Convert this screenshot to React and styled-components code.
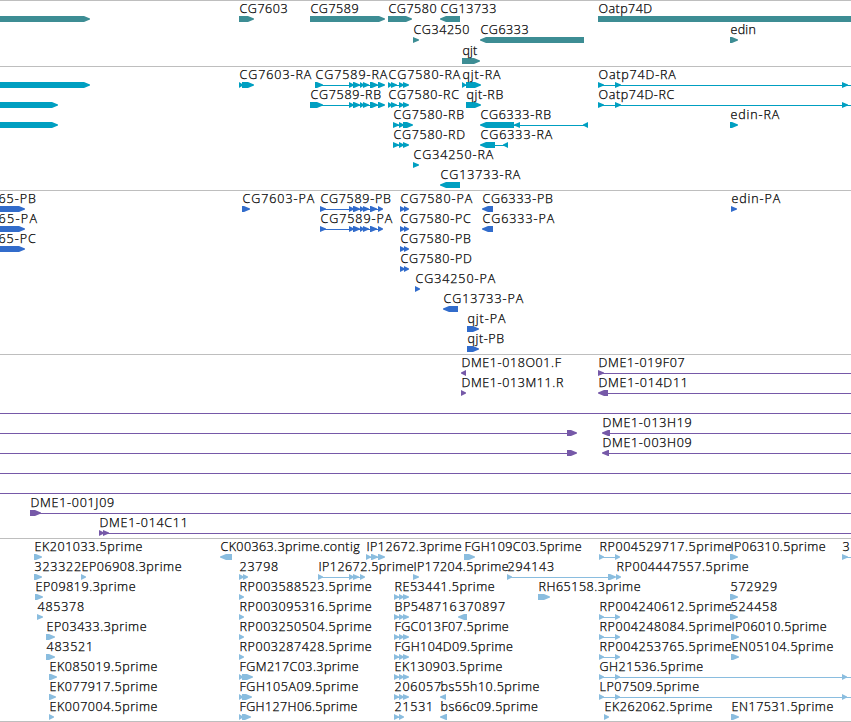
import React from "react";
import styled, { createGlobalStyle } from "styled-components";

const VIEW_WIDTH = 851;
const EDGE = VIEW_WIDTH + 10; // features running off the right side
const HEAD = 6;

const GlobalStyle = createGlobalStyle`
  body {
    margin: 0;
    background: #ffffff;
  }
`;

const Browser = styled.main`
  display: flex;
  flex-direction: column;
  width: ${VIEW_WIDTH}px;
  height: 722px;
  box-sizing: border-box;
  overflow: hidden;
  border-bottom: 1px solid #bebebe;
  background: #ffffff;
`;

const Track = styled.section`
  flex: none;
  display: flex;
  flex-direction: column;
  box-sizing: border-box;
  height: ${(p) => p.$height}px;
  border-top: 1px solid #bebebe;
  color: ${(p) => p.$color};
`;

const Lane = styled.div`
  position: relative;
  flex: none;
  height: ${(p) => p.$height}px;
`;

const Label = styled.span`
  position: absolute;
  top: 0;
  left: ${(p) => p.$x}px;
  padding-left: 0.5px;
  color: #000000;
  font-family: "Open Sans", "Noto Sans", sans-serif;
  font-size: 12.5px;
  font-weight: 300;
  -webkit-text-stroke: 0.25px #000000;
  line-height: 16px;
  letter-spacing: ${(p) => p.$tracking}px;
  white-space: nowrap;
`;

const Glyphs = styled.svg`
  position: absolute;
  top: 15px;
  left: 0;
  display: block;
  fill: currentColor;
`;

// right-facing feature, optionally mirrored, six pixels tall
const arrowPath = ([from, to], left) => {
  const head = Math.min(HEAD, to - from);
  if (left) {
    return `M${to} 0H${from + head}L${from} 2.6V3.4L${from + head} 6H${to}Z`;
  }
  return `M${from} 0H${to - head}L${to} 2.6V3.4L${to - head} 6H${from}Z`;
};

// f: forward strand, r: reverse strand
const f = (name, exons, extra) => ({ name, exons, ...extra });
const r = (name, exons, extra) => ({ name, exons, left: true, ...extra });
const span = () => ({ exons: [], line: [-5, EDGE] });

const toEdge = { line: [600, EDGE] };
const tail7589 = [[349, 354], [353, 360], [360, 364], [363, 369], [370, 378], [378, 385]];
const cds7589 = [[320, 326], [349, 354], [353, 360], [360, 364], [363, 369], [370, 377], [378, 383]];
const exons7580 = [[388, 392], [391, 397], [399, 404], [403, 409]];
const cds7580 = [[400, 405], [404, 409]];
const oatp = [[598, 604], [615, 621], [842, 848]];
const triple = [[394, 399], [399, 404], [403, 409]];
const pair = [[599, 604], [615, 620]];
const single = [[239, 244]];

const tracks = [
  {
    color: "#3d8d94",
    height: 66,
    lane: 21,
    lanes: [
      [
        f("", [[-5, 90]]),
        f("CG7603", [[239, 254]]),
        f("CG7589", [[310, 385]]),
        f("CG7580", [[388, 412]]),
        r("CG13733", [[440, 460]]),
        f("Oatp74D", [[598, EDGE]]),
      ],
      [f("CG34250", [[413, 419]]), r("CG6333", [[480, 584]]), f("edin", [[730, 738]])],
      [f("qjt", [[462, 480]])],
    ],
  },
  {
    color: "#009fc1",
    height: 124,
    lane: 20,
    lanes: [
      [
        f("", [[-5, 90]]),
        f("CG7603-RA", [[239, 243], [242, 254]]),
        f("CG7589-RA", [[315, 323], ...tail7589]),
        f("CG7580-RA", exons7580),
        f("qjt-RA", [[462, 466], [466, 481]]),
        f("Oatp74D-RA", oatp, toEdge),
      ],
      [
        f("", [[-5, 58]]),
        f("CG7589-RB", [[310, 323], ...tail7589]),
        f("CG7580-RC", exons7580),
        f("qjt-RB", [[466, 481]]),
        f("Oatp74D-RC", oatp, toEdge),
      ],
      [
        f("", [[-5, 58]]),
        f("CG7580-RB", [[393, 399], [399, 404], [403, 413]]),
        r("CG6333-RB", [[480, 514], [514, 520], [583, 588]]),
        f("edin-RA", [[730, 738]]),
      ],
      [
        f("CG7580-RD", [[393, 399], [399, 404], [403, 409]]),
        r("CG6333-RA", [[480, 495], [503, 508]]),
      ],
      [f("CG34250-RA", [[413, 419]])],
      [r("CG13733-RA", [[440, 460]])],
    ],
  },
  {
    color: "#326ccb",
    height: 164,
    lane: 20,
    lanes: [
      [
        f("65-PB", [[-5, 25]], { at: -2 }),
        f("CG7603-PA", [[242, 250]]),
        f("CG7589-PB", cds7589),
        f("CG7580-PA", cds7580),
        r("CG6333-PB", [[482, 493]]),
        f("edin-PA", [[731, 737]]),
      ],
      [
        f("65-PA", [[-5, 25]], { at: -2 }),
        f("CG7589-PA", cds7589),
        f("CG7580-PC", cds7580),
        r("CG6333-PA", [[482, 493]]),
      ],
      [f("65-PC", [[-5, 25]], { at: -2 }), f("CG7580-PB", cds7580)],
      [f("CG7580-PD", cds7580)],
      [f("CG34250-PA", [[415, 420]])],
      [r("CG13733-PA", [[443, 458]])],
      [f("qjt-PA", [[467, 479]])],
      [f("qjt-PB", [[467, 479]])],
    ],
  },
  {
    color: "#7659a8",
    height: 184,
    lane: 20,
    lanes: [
      [r("DME1-018O01.F", [[461, 466]]), f("DME1-019F07", [[598, 604]], toEdge)],
      [f("DME1-013M11.R", [[461, 466]]), r("DME1-014D11", [[598, 608]], toEdge)],
      [span()],
      [f("", [[567, 577]], { line: [-5, 570] }), r("DME1-013H19", [[602, 610]], { line: [606, EDGE] })],
      [f("", [[567, 577]], { line: [-5, 570] }), r("DME1-003H09", [[602, 609]], { line: [606, EDGE] })],
      [span()],
      [span()],
      [f("DME1-001J09", [[30, 41]], { line: [32, EDGE] })],
      [f("DME1-014C11", [[99, 104], [103, 109]], { line: [100, EDGE] })],
    ],
  },
  {
    color: "#8abddf",
    height: 183,
    lane: 20,
    lanes: [
      [
        f("EK201033.5prime", [[34, 42]]),
        r("CK00363.3prime.contig", [[220, 232]]),
        f("IP12672.3prime", [[366, 371], [371, 378], [378, 385]]),
        f("FGH109C03.5prime", [[464, 475]]),
        f("RP004529717.5prime", pair),
        f("IP06310.5prime", [[730, 738]]),
        f("3", [[842, 848]], { line: [843, EDGE] }),
      ],
      [
        f("323322", [[34, 42]]),
        f("EP06908.3prime", [[81, 86]]),
        f("23798", [[239, 244], [243, 248]]),
        f("IP12672.5prime", [[318, 323], [349, 354], [353, 359], [360, 365]]),
        f("IP17204.5prime", [[413, 419]]),
        f("294143", [[507, 512], [608, 616]]),
        f("RP004447557.5prime", [[616, 621]]),
      ],
      [
        f("EP09819.3prime", [[35, 43]]),
        f("RP003588523.5prime", single),
        f("RE53441.5prime", triple),
        f("RH65158.3prime", [[538, 550]]),
        f("572929", [[730, 738]]),
      ],
      [
        f("485378", [[37, 43]]),
        f("RP003095316.5prime", single),
        f("BP548716", triple),
        r("370897", [[458, 467]]),
        f("RP004240612.5prime", pair),
        f("524458", [[730, 738]]),
      ],
      [
        f("EP03433.3prime", [[46, 55]]),
        f("RP003250504.5prime", single),
        f("FGC013F07.5prime", triple),
        f("RP004248084.5prime", pair),
        f("IP06010.5prime", [[731, 739]]),
      ],
      [
        f("483521", [[46, 55]]),
        f("RP003287428.5prime", single),
        f("FGH104D09.5prime", triple),
        f("RP004253765.5prime", pair),
        f("EN05104.5prime", [[731, 739]]),
      ],
      [
        f("EK085019.5prime", [[49, 57]]),
        f("FGM217C03.3prime", [[239, 243], [242, 253]]),
        f("EK130903.5prime", triple),
        f("GH21536.5prime", [...pair, [842, 847]], toEdge),
      ],
      [
        f("EK077917.5prime", [[49, 56]]),
        f("FGH105A09.5prime", [[239, 243], [242, 252]]),
        f("206057", triple),
        r("bs55h10.5prime", [[440, 446]]),
        f("LP07509.5prime", [...pair, [842, 847]], toEdge),
      ],
      [
        f("EK007004.5prime", [[49, 54]]),
        f("FGH127H06.5prime", [[239, 243], [242, 251]]),
        f("21531", [[394, 399], [399, 404]]),
        r("bs66c09.5prime", [[440, 447]]),
        f("EK262062.5prime", [[604, 609]]),
        f("EN17531.5prime", [[731, 739]]),
      ],
    ],
  },
];

// extra advance per character, averaged over the whole name
const ADVANCE = {
  "-": 3,
  A: 1.9,
  I: -1.5,
  F: -0.7,
  M: -0.2,
  H: -0.4,
  O: 0.5,
  p: 0.6,
  r: 0.4,
  i: 0.3,
  m: 0.5,
  e: 0.4,
};

const tracking = (name) => {
  const extra = [...name].reduce(
    (sum, char) => sum + 0.1 + (/\d/.test(char) ? 0.67 : ADVANCE[char] || 0),
    0
  );
  return (extra / name.length).toFixed(2);
};

const Feature = ({ exons, line, left }) => {
  const intron = line || (exons.length > 1 && [exons[0][0] + 1, exons[exons.length - 1][1] - 1]);
  return (
    <>
      {intron && <rect x={intron[0]} y={3} width={intron[1] - intron[0]} height={1} />}
      {exons.map((exon) => (
        <path key={exon[0]} d={arrowPath(exon, left)} />
      ))}
    </>
  );
};

const App = () => (
  <>
    <GlobalStyle />
    <Browser>
      {tracks.map((track) => (
        <Track key={track.color} $height={track.height} $color={track.color}>
          {track.lanes.map((features, index) => (
            <Lane key={index} $height={track.lane}>
              <Glyphs width={VIEW_WIDTH} height={6}>
                {features.map((feature, i) => (
                  <Feature key={i} {...feature} />
                ))}
              </Glyphs>
              {features
                .filter((feature) => feature.name)
                .map(({ name, exons, at }) => (
                  <Label key={name} $x={at ?? exons[0][0]} $tracking={tracking(name)}>
                    {name}
                  </Label>
                ))}
            </Lane>
          ))}
        </Track>
      ))}
    </Browser>
  </>
);

export default App;
